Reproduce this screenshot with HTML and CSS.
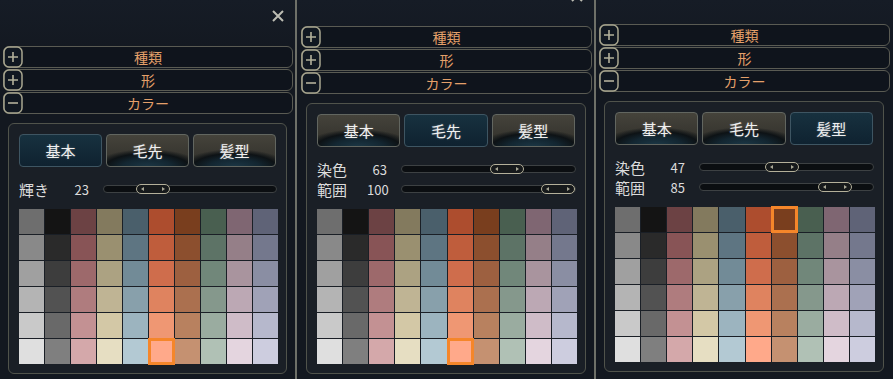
FILE: index.html
```html
<!DOCTYPE html>
<html lang="ja">
<head>
    <meta charset="UTF-8">
    <meta name="viewport" content="width=device-width, initial-scale=1.0">
    <title>カラー</title>
    <link rel="stylesheet" href="styles.css">
</head>
<body>
    <div class="strip">
        <!-- shot 1: top of the window, 基本 tab -->
        <div class="shot shot-1">
            <div class="window">
                <div class="header">
                    <svg class="close" viewBox="0 0 14 14"><path d="M2 2L12 12M12 2L2 12"/></svg>
                </div>
                <div class="accordion">
                    <div class="acc-row">
                        <svg class="acc-icon" viewBox="0 0 20 22"><rect x="1" y="1" width="18" height="20" rx="5"/><path d="M5 11h10M10 6v10"/></svg>
                        <span class="acc-title">種類</span>
                    </div>
                    <div class="acc-row">
                        <svg class="acc-icon" viewBox="0 0 20 22"><rect x="1" y="1" width="18" height="20" rx="5"/><path d="M5 11h10M10 6v10"/></svg>
                        <span class="acc-title">形</span>
                    </div>
                    <div class="acc-row">
                        <svg class="acc-icon" viewBox="0 0 20 22"><rect x="1" y="1" width="18" height="20" rx="5"/><path d="M5 11h10"/></svg>
                        <span class="acc-title">カラー</span>
                    </div>
                </div>
                <div class="color-box">
                    <div class="tabs">
                        <div class="tab active">基本</div>
                        <div class="tab">毛先</div>
                        <div class="tab">髪型</div>
                    </div>
                    <div class="slider-row">
                        <span class="label">輝き</span>
                        <span class="value">23</span>
                        <div class="track"><div class="thumb" style="--v:0.23"><i class="arr-l"></i><i class="arr-r"></i></div></div>
                    </div>
                    <div class="palette" data-selected="55"></div>
                </div>
            </div>
        </div>
        <div class="divider"></div>

        <!-- shot 2: 毛先 tab -->
        <div class="shot shot-2">
            <div class="window">
                <div class="header">
                    <svg class="close" viewBox="0 0 14 14"><path d="M2 2L12 12M12 2L2 12"/></svg>
                </div>
                <div class="accordion">
                    <div class="acc-row">
                        <svg class="acc-icon" viewBox="0 0 20 22"><rect x="1" y="1" width="18" height="20" rx="5"/><path d="M5 11h10M10 6v10"/></svg>
                        <span class="acc-title">種類</span>
                    </div>
                    <div class="acc-row">
                        <svg class="acc-icon" viewBox="0 0 20 22"><rect x="1" y="1" width="18" height="20" rx="5"/><path d="M5 11h10M10 6v10"/></svg>
                        <span class="acc-title">形</span>
                    </div>
                    <div class="acc-row">
                        <svg class="acc-icon" viewBox="0 0 20 22"><rect x="1" y="1" width="18" height="20" rx="5"/><path d="M5 11h10"/></svg>
                        <span class="acc-title">カラー</span>
                    </div>
                </div>
                <div class="color-box">
                    <div class="tabs">
                        <div class="tab">基本</div>
                        <div class="tab active">毛先</div>
                        <div class="tab">髪型</div>
                    </div>
                    <div class="slider-row">
                        <span class="label">染色</span>
                        <span class="value">63</span>
                        <div class="track"><div class="thumb" style="--v:0.63"><i class="arr-l"></i><i class="arr-r"></i></div></div>
                    </div>
                    <div class="slider-row">
                        <span class="label">範囲</span>
                        <span class="value">100</span>
                        <div class="track"><div class="thumb" style="--v:1"><i class="arr-l"></i><i class="arr-r"></i></div></div>
                    </div>
                    <div class="palette" data-selected="55"></div>
                </div>
            </div>
        </div>
        <div class="divider"></div>

        <!-- shot 3: 髪型 tab -->
        <div class="shot shot-3">
            <div class="window">
                <div class="header">
                    <svg class="close" viewBox="0 0 14 14"><path d="M2 2L12 12M12 2L2 12"/></svg>
                </div>
                <div class="accordion">
                    <div class="acc-row">
                        <svg class="acc-icon" viewBox="0 0 20 22"><rect x="1" y="1" width="18" height="20" rx="5"/><path d="M5 11h10M10 6v10"/></svg>
                        <span class="acc-title">種類</span>
                    </div>
                    <div class="acc-row">
                        <svg class="acc-icon" viewBox="0 0 20 22"><rect x="1" y="1" width="18" height="20" rx="5"/><path d="M5 11h10M10 6v10"/></svg>
                        <span class="acc-title">形</span>
                    </div>
                    <div class="acc-row">
                        <svg class="acc-icon" viewBox="0 0 20 22"><rect x="1" y="1" width="18" height="20" rx="5"/><path d="M5 11h10"/></svg>
                        <span class="acc-title">カラー</span>
                    </div>
                </div>
                <div class="color-box">
                    <div class="tabs">
                        <div class="tab">基本</div>
                        <div class="tab">毛先</div>
                        <div class="tab active">髪型</div>
                    </div>
                    <div class="slider-row">
                        <span class="label">染色</span>
                        <span class="value">47</span>
                        <div class="track"><div class="thumb" style="--v:0.47"><i class="arr-l"></i><i class="arr-r"></i></div></div>
                    </div>
                    <div class="slider-row">
                        <span class="label">範囲</span>
                        <span class="value">85</span>
                        <div class="track"><div class="thumb" style="--v:0.85"><i class="arr-l"></i><i class="arr-r"></i></div></div>
                    </div>
                    <div class="palette" data-selected="6"></div>
                </div>
            </div>
        </div>
    </div>

    <script>
        // palette columns, darkest to lightest
        const columns = [
            ['#6e6e6e', '#898989', '#a0a0a0', '#b4b4b4', '#c9c9c9', '#dfdfdf'],
            ['#141414', '#2a2a2a', '#3d3d3d', '#525252', '#696969', '#7f7f7f'],
            ['#6c4244', '#885456', '#9d696b', '#af7c7e', '#c39193', '#d4a8aa'],
            ['#837a5e', '#9a9070', '#aca282', '#bfb494', '#d3c8a6', '#e6dec2'],
            ['#4a5f6b', '#5e7582', '#728b97', '#88a0ab', '#9cb4bf', '#b3c9d3'],
            ['#ad4d2e', '#bf5d3c', '#cf6d4c', '#df835f', '#ef9773', '#ffa98a'],
            ['#793e1e', '#8c4f2e', '#9d6040', '#ab704f', '#b8815f', '#c59171'],
            ['#495f50', '#5d7366', '#71877a', '#85988c', '#9aaca0', '#b0c1b5'],
            ['#7f6672', '#957f88', '#a9949e', '#bca8b4', '#cfbcc8', '#e4d5df'],
            ['#5f6377', '#74788d', '#8a8ea3', '#a0a2b7', '#b6b8cc', '#cdcddf']
        ];

        document.querySelectorAll('.palette').forEach(grid => {
            const selected = Number(grid.dataset.selected);
            for (let row = 0; row < 6; row++) {
                for (let col = 0; col < 10; col++) {
                    const cell = document.createElement('div');
                    cell.classList.add('swatch');
                    cell.style.background = columns[col][row];
                    if (row * 10 + col === selected) {
                        cell.classList.add('selected');
                    }
                    grid.appendChild(cell);
                }
            }
        });
    </script>
</body>
</html>
```

FILE: styles.css
```css
body {
    margin: 0;
    padding: 0;
    background: #131820;
    font-family: "Noto Sans CJK JP", "Noto Sans", sans-serif;
}
.strip {
    display: flex;
    height: 379px;
    overflow: hidden;
}
.shot {
    width: 297px;
    flex: none;
    overflow: hidden;
    background: linear-gradient(#161c26, #131820 60px);
}
.shot-1 {
    width: 295px;
}
.divider {
    width: 2px;
    flex: none;
    background: #6e7068;
}
.window {
    padding: 0 2px 0 3px;
}
.shot-2 .window {
    margin-top: -20px;
    padding-left: 4px;
}
.shot-3 .window {
    margin-top: -22px;
    padding-right: 3px;
}
.header {
    height: 46px;
    box-sizing: border-box;
    display: flex;
    justify-content: flex-end;
    align-items: flex-start;
    padding: 9px 8px 0 0;
}
.close {
    width: 14px;
    height: 14px;
    fill: none;
    stroke: #bdbdb3;
    stroke-width: 2;
}
.accordion {
    display: flex;
    flex-direction: column;
    gap: 1px;
}
.acc-row {
    position: relative;
    height: 22px;
    box-sizing: border-box;
    border: 1px solid #5a5b53;
    border-radius: 6px;
    background: #0f141c;
    display: flex;
    align-items: center;
    justify-content: center;
}
.acc-icon {
    position: absolute;
    left: -1px;
    top: -1px;
    width: 20px;
    height: 22px;
}
.acc-icon rect {
    fill: #111821;
    stroke: #a9a790;
    stroke-width: 1.5;
}
.acc-icon path {
    fill: none;
    stroke: #b3b19b;
    stroke-width: 1.6;
}
.acc-title {
    color: #e4a06a;
    font-size: 14px;
    line-height: 1;
}
.color-box {
    margin: 9px 6px 0 5px;
    border: 1px solid #50534b;
    border-radius: 6px;
    background: #1a1f26;
    padding: 10px 10px 9px;
}
.tabs {
    display: flex;
    gap: 4px;
    margin-bottom: 12px;
}
.tab {
    flex: 1;
    height: 33px;
    box-sizing: border-box;
    border: 1px solid #626660;
    border-radius: 4px;
    background:
        radial-gradient(ellipse 80% 70% at 50% 105%, #1c3847 0%, #132631 40%, #0d1215 65%, rgba(13, 18, 21, 0) 85%),
        linear-gradient(#45433b, #302f2a);
    color: #f0f0f0;
    font-size: 15px;
    display: flex;
    align-items: center;
    justify-content: center;
    text-shadow: 0 0 2px rgba(255, 255, 255, 0.35);
}
.tab.active {
    border-color: #3e5562;
    background: linear-gradient(#17313f, #0f2230);
}
.slider-row {
    height: 20px;
    display: flex;
    align-items: center;
    color: #dcdcdc;
}
.label {
    width: 50px;
    font-size: 15px;
}
.value {
    width: 20px;
    text-align: right;
    font-size: 13px;
}
.track {
    position: relative;
    flex: 1;
    height: 8px;
    margin: 0 -1px 0 14px;
    box-sizing: border-box;
    border: 1px solid #3d4143;
    border-radius: 4px;
    background: #0b0e11;
}
.thumb {
    position: absolute;
    top: -2px;
    left: calc((100% - 34px) * var(--v));
    width: 34px;
    height: 10px;
    box-sizing: border-box;
    border: 1px solid #b4b09a;
    border-radius: 5px;
    background: #16191b;
}
.thumb i {
    position: absolute;
    top: 2px;
    width: 0;
    height: 0;
    border-top: 2px solid transparent;
    border-bottom: 2px solid transparent;
}
.arr-l {
    left: 4px;
    border-right: 3px solid #a9a796;
}
.arr-r {
    right: 4px;
    border-left: 3px solid #a9a796;
}
.palette {
    display: grid;
    grid-template-columns: repeat(10, 1fr);
    grid-auto-rows: 25px;
    gap: 1px;
    margin: 10px -2px 0 0;
}
.swatch.selected {
    position: relative;
    z-index: 1;
    outline: 3px solid #f5862a;
    outline-offset: -2px;
}
```
